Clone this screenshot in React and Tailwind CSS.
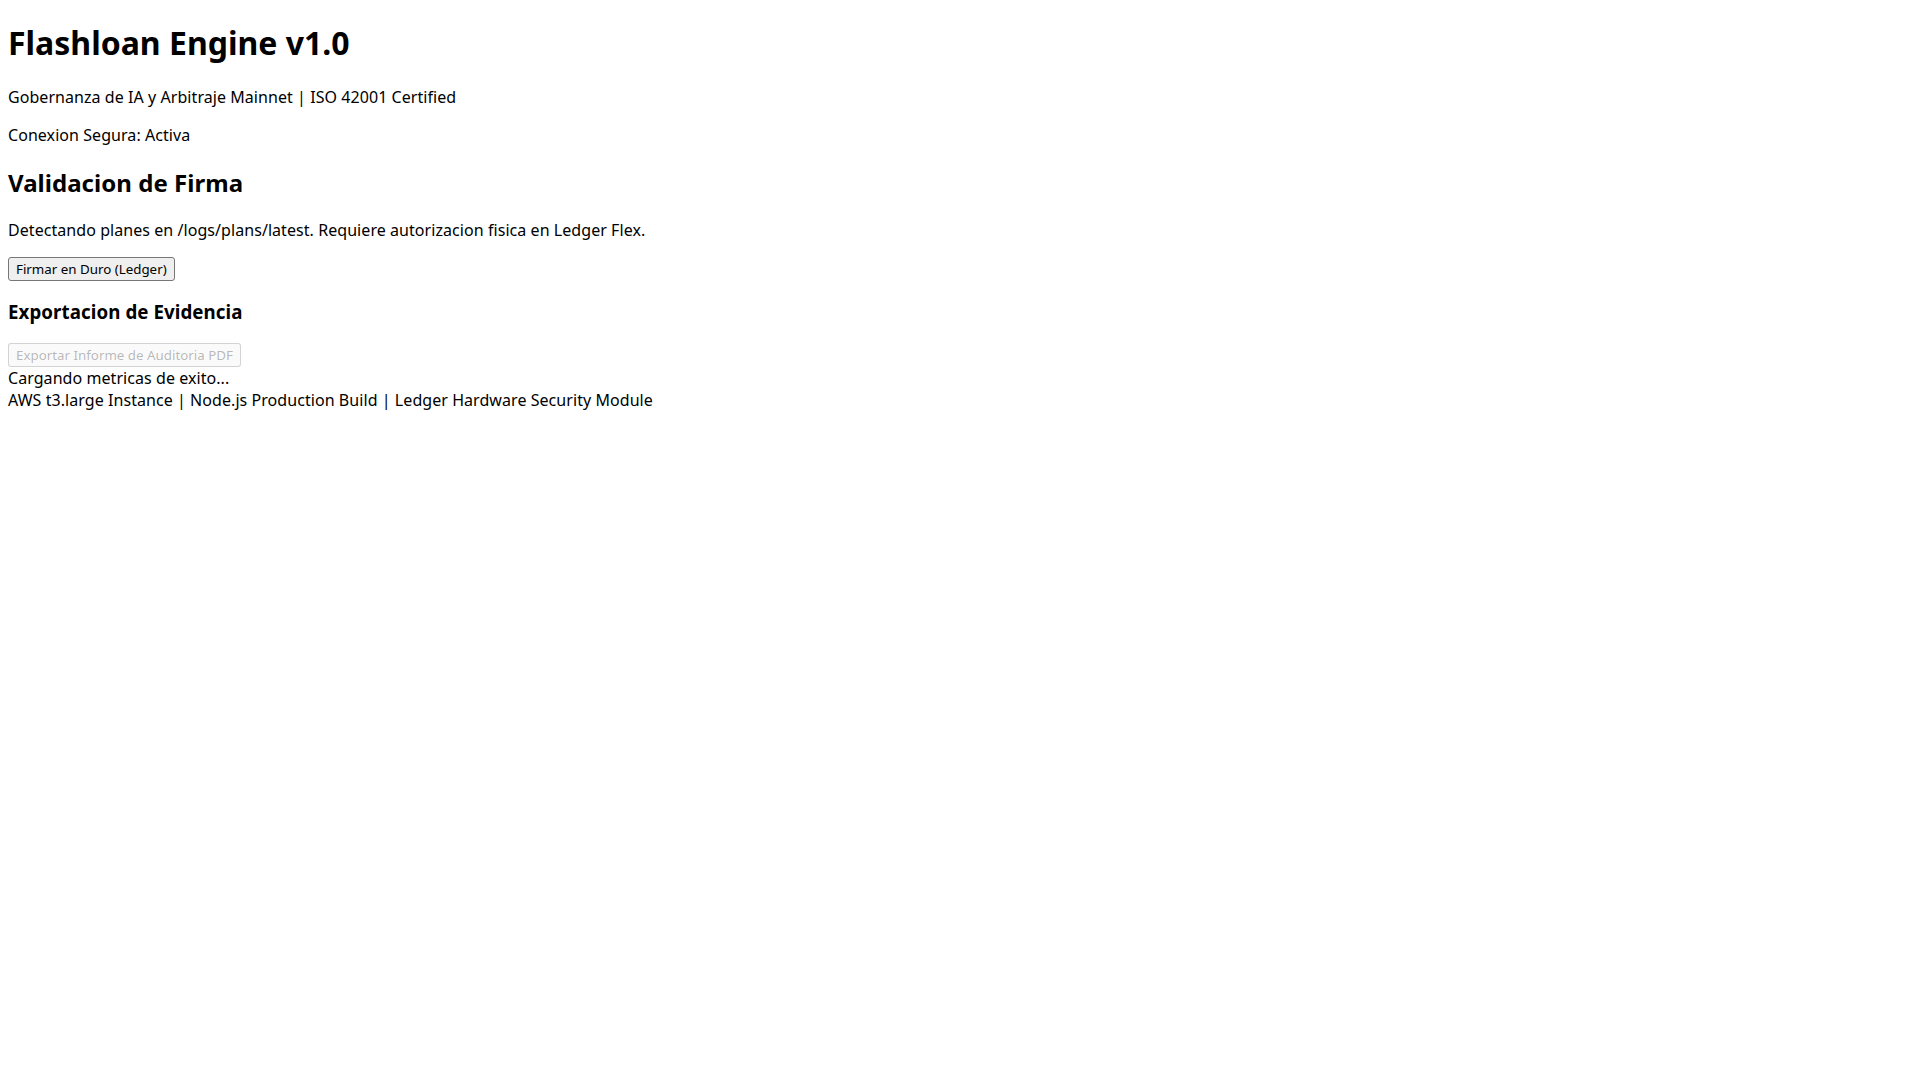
export default function App() {
  return (
    <div className="px-2 text-black bg-white font-['Noto_Sans',sans-serif] text-base leading-[normal]">
      <h1 className="text-[32px] font-bold my-[21.44px] leading-[normal]">Flashloan Engine v1.0</h1>
      <p className="my-4 leading-[normal] tracking-[0.06px]">Gobernanza de IA y Arbitraje Mainnet | ISO 42001 Certified</p>
      <p className="my-4 leading-[normal] tracking-[0.06px]">Conexion Segura: Activa</p>
      <h2 className="text-[24px] font-bold my-[19.92px] leading-[normal] tracking-[0.04px]">Validacion de Firma</h2>
      <p className="my-4 leading-[normal] tracking-[0.06px]">Detectando planes en /logs/plans/latest. Requiere autorizacion fisica en Ledger Flex.</p>
      <div className="leading-[normal]">
        <button className="text-[13.333px] leading-[normal] px-[7px] py-[2px] border border-[#767676] rounded-[3px] bg-[#efefef] text-black">
          Firmar en Duro (Ledger)
        </button>
      </div>
      <h3 className="text-[18.72px] font-bold my-[18.72px] leading-[normal] tracking-[0.08px]">Exportacion de Evidencia</h3>
      <div className="leading-[normal]">
        <button disabled className="text-[13.333px] leading-[normal] px-[7px] py-[2px] border border-[#767676]/30 rounded-[3px] bg-[#efefef]/30 text-[#101010]/30">
          Exportar Informe de Auditoria PDF
        </button>
      </div>
      <div className="leading-[normal] tracking-[0.06px]">Cargando metricas de exito...</div>
      <div className="leading-[normal] tracking-[0.06px]">AWS t3.large Instance | Node.js Production Build | Ledger Hardware Security Module</div>
    </div>
  );
}
